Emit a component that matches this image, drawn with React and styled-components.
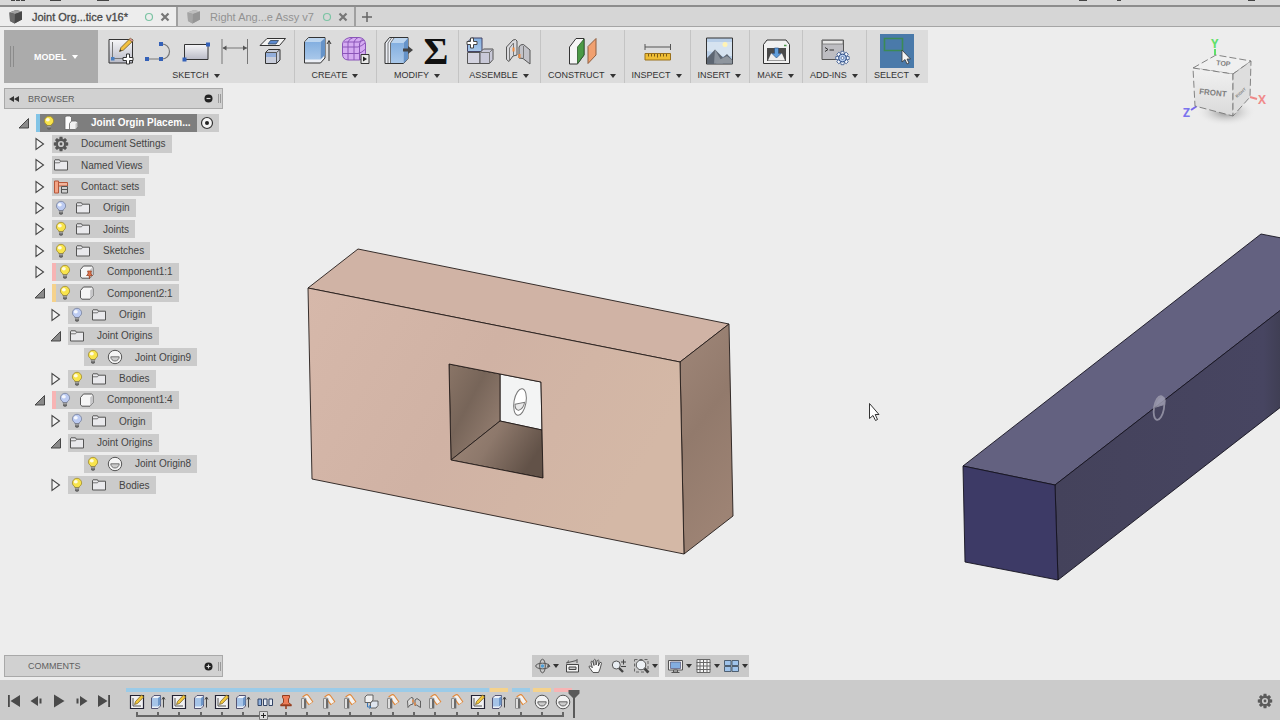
import { useState } from 'react'
import styled, { createGlobalStyle, css } from 'styled-components'

const GlobalStyle = createGlobalStyle`
  * {
    box-sizing: border-box;
  }

  body {
    margin: 0;
    background: #ededed;
    color: #444;
    font-family: 'Liberation Sans', Arial, sans-serif;
    font-size: 10px;
  }

  button {
    padding: 0;
    border: 0;
    background: none;
    color: inherit;
    font: inherit;
  }

  svg {
    display: block;
    flex: none;
  }
`

const Page = styled.div`
  display: flex;
  flex-direction: column;
  min-height: 100vh;
`

const QuickBar = styled.header`
  display: flex;
  justify-content: space-between;
  height: 7px;
  border-bottom: 2px solid #8d8d8d;
  background: #d8d8d8;
`

/* document tabs */

const TabBar = styled.nav`
  display: flex;
  height: 20px;
  border-bottom: 1px solid #a5a5a5;
  background: #d6d6d6;
`

const Tab = styled.div`
  display: flex;
  align-items: center;
  gap: 6px;
  width: 178px;
  padding: 0 6px 0 8px;
  border-right: 2px solid #a0a0a0;
  background: ${(p) => (p.$active ? '#ededed' : '#d6d6d6')};
  color: ${(p) => (p.$active ? '#484848' : '#929292')};
`

const TabName = styled.button`
  display: flex;
  flex: 1;
  align-items: center;
  gap: 8px;
  font-size: 11px;
  white-space: nowrap;
  -webkit-text-stroke: ${(p) => (p.$active ? '0.3px #484848' : '0')};
`

const NewTab = styled.button`
  width: 26px;
`

/* toolbar */

const Toolbar = styled.div`
  display: flex;
  align-self: flex-start;
  margin: 3px 0 0 4px;
  background: #dcdcdc;
`

const Workspace = styled.button`
  display: flex;
  align-items: center;
  gap: 20px;
  width: 94px;
  padding: 0 6px;
  background: #ababab;
  color: #fff;
  font-size: 9px;
  font-weight: bold;
`

const WorkspaceName = styled.span`
  display: flex;
  align-items: center;
  gap: 5px;
`

const Grip = styled.span`
  width: 4px;
  height: 21px;
  border: solid #8b8b8b;
  border-width: 0 1px;
`

const Group = styled.div`
  display: flex;
  flex-direction: column;
  align-items: center;
  gap: 2px;
  height: 53px;
  padding: 4px 5px 0;

  & + & {
    padding-left: 4px;
    border-left: 1px solid #c4c4c4;
  }
`

const Tools = styled.div`
  display: flex;
  gap: 4px;
`

const Tool = styled.button`
  background: ${(p) => (p.$selected ? '#4a7aaa' : 'none')};
`

const GroupMenu = styled.button`
  display: flex;
  align-items: center;
  gap: 5px;
  padding: 0 3px;
  color: #333;
  font-size: 9px;
  line-height: 11px;
`

const Arrow = styled.i`
  border: solid transparent;
  border-width: 4px 3px 0;
  border-top-color: ${(p) => p.$color || '#333'};
`

/* canvas and the panels over it */

const Stage = styled.main`
  position: relative;
  display: flex;
  flex: 1;
  flex-direction: column;
  justify-content: space-between;
  padding: 5px 4px 3px;
`

const Scene = styled.svg`
  position: absolute;
  inset: 0;
  width: 100%;
  height: 100%;
`

const CubeHolder = styled.div`
  position: absolute;
  top: 0;
  right: 0;
`

const Panel = styled.section`
  position: relative;
  width: 219px;
`

const PanelHead = styled.div`
  display: flex;
  align-items: center;
  gap: 9px;
  height: ${(p) => (p.$tall ? '22px' : '21px')};
  padding: 0 1px 0 4px;
  border: 1px solid #a9a9a9;
  background: #d1d1d1;
  color: #5f5f5f;
`

const PanelTitle = styled.h2`
  flex: 1;
  margin: 0;
  padding-left: ${(p) => (p.$inset ? '19px' : '0')};
  font-size: 9px;
  font-weight: normal;
`

const PanelGrip = styled.i`
  width: 3px;
  height: 9px;
  margin-left: -4px;
  border: solid #999;
  border-width: 0 1px;
`

const Tree = styled.ul`
  display: grid;
  grid-auto-rows: 1fr;
  min-height: 384px;
  margin: 3px 0 0;
  padding: 0;
  list-style: none;
`

const Row = styled.li`
  display: flex;
  align-items: center;
  gap: 4px;
  padding-left: ${(p) => p.$level * 16 + 12}px;
`

const Toggle = styled.button`
  display: flex;
  justify-content: center;
  width: 16px;
`

const Chip = styled.div`
  display: flex;
  align-items: center;
  height: 18px;
  padding-right: ${(p) => (p.$root ? '4px' : '6px')};
  background: #cbcbcb;
  white-space: nowrap;
`

const Strip = styled.i`
  align-self: stretch;
  width: 4px;
  background: ${(p) => p.$color};
`

const ChipBody = styled.div`
  display: flex;
  align-items: center;
  gap: 4px;
  height: 18px;

  ${(p) =>
    p.$root &&
    css`
      margin-right: 2px;
      padding-right: 7px;
      background: #7e7e7e;
      color: #fff;
      font-weight: bold;
    `}
`

const ChipText = styled.span`
  padding-left: 7px;
`

const BottomRow = styled.div`
  position: relative;
  display: grid;
  grid-template-columns: 1fr auto 1fr;
`

const NavBars = styled.div`
  display: flex;
  gap: 6px;
`

const NavBar = styled.div`
  display: flex;
  align-items: center;
  gap: ${(p) => p.$gap}px;
  height: 22px;
  padding: 0 1px;
  background: #c9c9c9;
`

const NavButton = styled.button`
  display: flex;
  align-items: center;
  gap: 1px;
`

/* timeline */

const Timeline = styled.footer`
  display: flex;
  height: 40px;
  padding: 0 6px 0 4px;
  background: #cbcbcb;
`

const Playback = styled.div`
  display: flex;
  align-items: center;
  margin-right: 12px;
  padding-top: 2px;
`

const PlayButton = styled.button`
  display: flex;
  justify-content: center;
  width: 22px;
`

const Track = styled.div`
  position: relative;
  padding-top: 8px;
`

const Features = styled.ol`
  display: grid;
  grid-template-columns: repeat(21, 1fr);
  width: 448px;
  margin: 0;
  padding: 0;
  list-style: none;
`

const Feature = styled.li`
  display: flex;
  flex-direction: column;
  align-items: center;
  gap: 2px;

  &::before {
    content: '';
    align-self: ${(p) => (p.$joined ? 'stretch' : 'center')};
    width: ${(p) => (p.$joined ? 'auto' : '18px')};
    height: 4px;
    background: ${(p) => p.$color};
  }

  &::after {
    content: '';
    width: 2px;
    height: 4px;
    background: #666;
  }
`

const Rail = styled.div`
  height: 2px;
  margin: -1px 10px 0;
  background: #666;
`

const Expand = styled.button`
  position: absolute;
  left: 133px;
  bottom: 0;
`

const Playhead = styled.button`
  position: absolute;
  top: 9px;
  right: -6px;
`

const Settings = styled.button`
  margin: 2px 0 0 auto;
`

/* icons */

const gearTeeth = [0, 45, 90, 135, 180, 225, 270, 315]

const Gear = ({ size = 18, color = '#555', hub = '#cbcbcb' }) => (
  <svg width={size} height={size} viewBox='0 0 18 18'>
    {gearTeeth.map((a) => (
      <path key={a} d='M7.6 1.8h2.8l.5 3H7.1z' fill={color} transform={`rotate(${a} 9 9)`} />
    ))}
    <circle cx='9' cy='9' r='4' fill={hub} stroke={color} strokeWidth='1.800' />
    <circle cx='9' cy='9' r='1.400' fill={color} />
  </svg>
)

const Bulb = ({ on }) => (
  <svg width='18' height='18' viewBox='0 0 18 18'>
    <path
      d='M6.9 10.800C5.100 9.600 4.400 8.300 4.400 6.900a4.600 4.600 0 0 1 9.200 0c0 1.400-.7 2.700-2.500 3.900v1H6.900z'
      fill={on ? '#f8e44c' : '#bccbf2'}
      stroke={on ? '#a08a2c' : '#76809c'}
      strokeWidth='.8'
    />
    <ellipse cx='7.800' cy='5.800' rx='2' ry='1.800' fill='#fff' opacity='.85' />
    <path d='M7 11.500h4v2.700l-1 1.500H8l-1-1.500z' fill='#666' />
    <path d='M7.200 12.800h3.600' stroke='#ddd' strokeWidth='.7' />
  </svg>
)

const Folder = () => (
  <svg width='18' height='18' viewBox='0 0 18 18'>
    <path d='M2.500 14V4.500l.5-.7h4.500l.8 1.400h7.200V14z' fill='#e9e9ec' stroke='#555' />
    <path d='M3 6.800h4.500l1-1.500' fill='none' stroke='#666' strokeWidth='.9' />
  </svg>
)

const ContactSets = () => (
  <svg width='18' height='18' viewBox='0 0 18 18'>
    <path d='M2.500 3h4v12h-4z' fill='#f3a486' stroke='#b5573a' />
    <path d='M6.500 4.500h9v3.500h-9z' fill='#f1b49c' stroke='#b5573a' />
    <path d='M9.500 8.500h6v6.500h-6zM9.500 11.500h6' fill='#cfcfcf' stroke='#555' />
  </svg>
)

const Component = ({ pinned }) => (
  <svg width='18' height='18' viewBox='0 0 18 18'>
    <path d='M2.500 6.500 5.500 3h8l1.500 1.300v7.500L12 15.200H4l-1.500-1.300z' fill='#f5f5f5' stroke='#555' />
    <path d='M12.200 15V6.200L15 4.300v7.500z' fill='#c6c6c8' />
    {pinned && (
      <path
        d='M9.500 8h4l-.5 1v2l1.500 1.500h-2.300L11.500 15.500 11 12.500H8.500L10 11V9z'
        fill='#e0744c'
        stroke='#8f3a1b'
        strokeWidth='.7'
      />
    )}
  </svg>
)

const Assembly = () => (
  <svg width='18' height='18' viewBox='0 0 18 18'>
    <path d='M3 3.500 4.500 2H8l1.500 1.500V8l-1 1v6.500H3z' fill='#fff' stroke='#666' strokeWidth='.8' />
    <path d='M7.500 9.500 9.500 7H14l1.500 1v4.500L13.500 15.500h-6z' fill='#f1f1f1' stroke='#666' strokeWidth='.8' />
    <path d='M13.500 15.500V9.700l2-1.700v4.500z' fill='#c4c4c4' />
  </svg>
)

const JointOrigin = ({ size = 18 }) => (
  <svg width={size} height={size} viewBox='0 0 18 18'>
    <circle cx='9' cy='9' r='6.700' fill='#f4f4f4' stroke='#555' />
    <path d='M4.800 8.800h8.400a4.200 4.200 0 0 1-8.400 0z' fill='#ccc' stroke='#666' strokeWidth='.9' />
  </svg>
)

const Opened = () => (
  <svg width='12' height='12' viewBox='0 0 12 12'>
    <path d='M10.500 1.500v9.500H1z' fill='#8a8a8a' stroke='#3a3a3a' strokeWidth='.9' />
  </svg>
)

const Closed = () => (
  <svg width='12' height='14' viewBox='0 0 12 14'>
    <path d='M2 1.500V12.500L9.500 7z' fill='#f4f4f4' stroke='#444' strokeWidth='1.100' />
  </svg>
)

const DocCube = ({ dim }) => (
  <svg width='16' height='16' viewBox='0 0 16 16' opacity={dim ? 0.45 : 1}>
    <path d='M1.500 3.500 8 1l6 1.500v8L6.500 14.500 2 12z' fill='#555' />
    <path d='M1.500 3.500 8 1l6 1.500L7 5z' fill='#a2a2a2' />
    <path d='M7 5l7-2.500v8l-7.500 4z' fill='#484848' />
    <path d='M1.500 3.500 7 5l-.5 9.500L2 12z' fill='#6b6b6b' />
  </svg>
)

const SyncDot = () => (
  <svg width='10' height='10' viewBox='0 0 10 10'>
    <circle cx='5' cy='5' r='3.500' fill='none' stroke='#7cc4a4' strokeWidth='1.200' />
  </svg>
)

const Cross = () => (
  <svg width='10' height='10' viewBox='0 0 10 10'>
    <path d='M1.500 1.500l7 7M8.500 1.500l-7 7' stroke='#777' strokeWidth='2.200' />
  </svg>
)

const Pencil = () => (
  <>
    <path d='M16.500 17.500 18 13.500 26.500 5l2.800 2.600L20.500 16z' fill='#f3c13f' stroke='#6b5724' strokeWidth='.8' />
    <path d='M26 5.500 27.500 4l2.800 2.600L29 8z' fill='#d99' stroke='#6b5724' strokeWidth='.6' />
    <path d='M16.500 17.500l.8-2.300 1.500 1.500z' fill='#333' />
  </>
)

// drawings of the toolbar buttons, each on a 34px square
const toolArt = {
  sketch: (
    <>
      <path d='M6 5.500h23.500V29H6z' fill='url(#metal)' stroke='#333' />
      <path d='M9.500 8v16.500H24' fill='none' stroke='#777' />
      <path d='M8 23h3.500v3.500H8z' fill='#4b7fc0' />
      <Pencil />
      <path
        d='M23.500 20h3v3.500H30v3h-3.500V30h-3v-3.500H20v-3h3.500z'
        fill='#fff'
        stroke='#333'
      />
    </>
  ),
  line: (
    <>
      <path d='M6 25h15a7.500 7.500 0 0 0 0-15h-1' fill='none' stroke='#777' strokeWidth='1.200' />
      <path d='M4 23h4v4H4zM18 23h4v4h-4zM18 8h4v4h-4z' fill='#3461b8' />
    </>
  ),
  rectangle: (
    <>
      <path d='M5.500 10.500H29V25.500H5.500z' fill='url(#metal)' stroke='#333' />
      <path d='M3.500 23.500h4v4h-4zM27 8.500h4v4h-4z' fill='#3461b8' />
    </>
  ),
  dimension: (
    <>
      <path d='M5 5v25M30.500 5v25M6 14h24' stroke='#777' fill='none' />
      <path d='M5.500 14l4-2.500v5zM30 14l-4-2.500v5z' fill='#555' />
    </>
  ),
  project: (
    <>
      <path d='M12 4.500h18.500L24.500 11.500H5z' fill='#f4f4f4' stroke='#333' />
      <path d='M15.500 6.500h8l-2.500 3.500h-8z' fill='#5c8ad0' stroke='#345' strokeWidth='.8' />
      <path d='M10.500 18.500 13.500 15.500H25V26l-3.500 3.500h-11z' fill='#c8cddb' stroke='#333' />
      <path d='M11 19h10v4H11z' fill='#93aedb' />
      <path d='M10.500 18.500h11V29.500M21.500 18.500 25 15.500' fill='none' stroke='#555' />
    </>
  ),
  extrude: (
    <>
      <path d='M5.500 8 9.500 3.500H26V24l-4.500 5h-16z' fill='#eceff5' stroke='#333' />
      <path d='M6 8h15.500v17.500H6z' fill='url(#blue)' />
      <path d='M6 8l3.700-4H26l-4.500 4z' fill='#bcd5ef' />
      <path d='M21.500 8 26 4v17l-4.500 4.500z' fill='#6593c9' />
      <path d='M30 27V7M28 10l2-3.500 2 3.500' fill='none' stroke='#333' />
    </>
  ),
  form: (
    <>
      <path d='M5.500 10Q6 5 13 3.500h9Q28 4 28.500 10v9q-.5 6-6 7H11q-5.500-.5-5.500-6z' fill='#d5abf2' stroke='#8a55b8' />
      <path d='M5.500 13H21q4-1 7-4M5.500 19.500H21q4-1 7-4M11 26V8q1-3 5-4.500M17 26V8q1-3 4-4.500M22.500 26V10q1-4 3-5M7 8h15l5-2' fill='none' stroke='#8a55b8' />
      <path d='M24 20.500h8v9h-8z' fill='#e9e9e9' stroke='#333' />
      <path d='M26 22.500l4 2.500-4 2.500z' fill='#222' />
    </>
  ),
  pressPull: (
    <>
      <path d='M4 9 8.500 3.500H27V24.500L22.500 29.500H4z' fill='#eceff5' stroke='#333' />
      <path d='M9.500 9 13 4h14l-4.500 5z' fill='#bcd5ef' />
      <path d='M9.500 9h13v20h-13z' fill='url(#blue)' />
      <path d='M22.500 9 27 4v20.500l-4.500 5z' fill='#6593c9' />
      <path d='M9.500 29V9l3.500-5M7 29V9l3.500-5' fill='none' stroke='#555' strokeWidth='.8' />
      <path d='M22 14.500h5V12l5 4-5 4v-2.500h-5z' fill='#444' />
    </>
  ),
  parameters: (
    <text x='17' y='30' fontFamily='Liberation Serif, serif' fontSize='38' fontWeight='bold' textAnchor='middle' fill='#111'>
      Σ
    </text>
  ),
  newComponent: (
    <>
      <path d='M4.500 17.500V8l4-4H19v13.500z' fill='url(#blue)' stroke='#446' />
      <path d='M4.500 18.500H17V29.500H4.500z' fill='#d4d4e0' stroke='#555' />
      <path d='M17 18.500 20.500 15H30v10.500L26.500 29.500H17z' fill='#c9c9d8' stroke='#555' />
      <path d='M17.500 18.500h9V29.500M26.500 18.500 30 15' fill='none' stroke='#777' />
      <path d='M7.500 4h3v3.500H14v3h-3.500V14h-3v-3.500H4v-3h3.500z' fill='#fff' stroke='#444' />
    </>
  ),
  joint: (
    <>
      <path d='M5.500 13 12 6q3-1.500 4 1v14l-4 1-4 5.500-2.500-2z' fill='#dadadd' stroke='#555' />
      <path d='M8.500 26V14l4-5v13' fill='none' stroke='#777' />
      <path d='M18 13q1-3 4.500-2.500L29 16v14l-7-5.500-4-.5z' fill='#c2c2c8' stroke='#555' />
      <path d='M22.500 24V12' stroke='#777' />
      <path d='M12.500 13.500v4M18.500 20v4' stroke='#f08a3e' strokeWidth='2' />
    </>
  ),
  construct: (
    <>
      <path d='M4.500 13 11 4.500H19V21l-6.500 9h-8z' fill='#f6f6f6' stroke='#333' />
      <path d='M12.500 13 19 5v16l-6.500 8.500z' fill='#4b9a45' stroke='#2a5a28' strokeWidth='.8' />
      <path d='M23 12.500 31 4.500V21l-8 8.500z' fill='#f1a06f' stroke='#8f5f40' />
    </>
  ),
  inspect: (
    <>
      <path d='M5 10v6M30.500 10v6M5 13h25' stroke='#555' fill='none' />
      <path d='M5 19.500h25.500V26H5z' fill='#eebd35' stroke='#9a701b' />
      <path d='M8.500 20v2.500M11.500 20v2.500M14.500 20v2.500M17.500 20v3.500M20.500 20v2.500M23.500 20v2.500M26.500 20v2.500' stroke='#7c5a17' />
    </>
  ),
  insert: (
    <>
      <path d='M4.500 4h26v26h-26z' fill='#b9cfe8' stroke='#333' />
      <path d='M5 17l6 1 6 4h13V8H5z' fill='#d6e3f0' />
      <circle cx='23' cy='10.500' r='2.500' fill='#fff3b5' />
      <path d='M5 24l8-8.500 8 8 4-3.500 5.500 6v4H5z' fill='#5d6672' />
      <path d='M13 15.500 21 29.500H12z' fill='#8b939d' />
      <path d='M17 26l8-4 5 4v3.500H14z' fill='#8f969e' />
    </>
  ),
  make: (
    <>
      <path d='M4.500 10.500 8 6h19l3.500 4.500V29.500h-26z' fill='#f1f1f1' stroke='#333' />
      <path d='M8 14h19v13H8z' fill='#4a4a4a' />
      <path d='M9 26.500l3-7h11l3 7z' fill='#eee' />
      <path d='M15.500 14h4v5.500H22L17.500 24 13 19.500h2.500z' fill='#5f9edc' stroke='#247' strokeWidth='.6' />
      <path d='M25 11.500h2.500' stroke='#4a9a4a' strokeWidth='1.500' />
    </>
  ),
  addIns: (
    <>
      <path d='M5 6h21.500v19.500H5z' fill='#bdbdc2' stroke='#555' />
      <path d='M5.500 6.500h20.500v3.500H5.500z' fill='#e6e6e6' stroke='#666' strokeWidth='.7' />
      <path d='M8 13.500l3 2-3 2M12.500 16h4.500' fill='none' stroke='#333' />
      <g transform='translate(16.500 15)'>
        {gearTeeth.map((a) => (
          <path
            key={a}
            d='M7.600 2.300h2.800l.5 3H7.100z'
            fill='#f3f7fd'
            stroke='#36558c'
            strokeWidth='.8'
            transform={`rotate(${a} 9 9)`}
          />
        ))}
        <circle cx='9' cy='9' r='3.800' fill='#b9d0f0' stroke='#36558c' />
        <circle cx='9' cy='9' r='1.500' fill='#f3f7fd' stroke='#36558c' strokeWidth='.7' />
      </g>
    </>
  ),
  select: (
    <>
      <path d='M4.500 4.500h18v12h-18z' fill='none' stroke='#3b8a55' strokeWidth='1.600' />
      <path d='M22 16v12l3-2.500 2 4.500 2-1-2-4h3.500z' fill='#f4f4f4' stroke='#333' strokeWidth='.8' />
    </>
  ),
}

const ToolIcon = ({ name }) => (
  <svg width='34' height='34' viewBox='0 0 34 34' overflow='visible'>
    {toolArt[name]}
  </svg>
)

const navArt = {
  orbit: (
    <>
      <ellipse cx='9' cy='9' rx='6.800' ry='2.800' fill='none' stroke='#555' />
      <ellipse cx='9' cy='9' rx='2.800' ry='6.800' fill='none' stroke='#555' />
      <path d='M14.500 6.500l2.500 3-3.500.8z' fill='#555' />
      <circle cx='9' cy='9' r='1.700' fill='#4d9fd8' />
    </>
  ),
  lookAt: (
    <>
      <path d='M3 7.500h12V15H3z' fill='#f1f1f1' stroke='#444' />
      <path d='M5.500 10h7v2.500h-7z' fill='#c9c9c9' stroke='#444' />
      <path d='M2.500 6 13 3.500M13.500 2v4M4 6l1-2.500' stroke='#555' fill='none' />
    </>
  ),
  pan: (
    <path
      d='M6.500 15.500 2.500 10q0-1.500 1.500-1l1.800 1.800L4.500 5q.3-1.500 1.700-.5L7.500 8.500 7.300 3q.9-1.500 1.900 0l.3 5L10.800 3.500q1.200-1 1.700.2L11.800 9l1.700-3.500q1.500-.6 1.500.8L13.500 12l-1.500 3.500z'
      fill='#fafafa'
      stroke='#444'
      strokeWidth='.9'
    />
  ),
  zoom: (
    <>
      <path d='M9 10.500 13.500 15' stroke='#444' strokeWidth='2.400' />
      <circle cx='6.800' cy='8' r='4' fill='#e8edf2' stroke='#555' />
      <path d='M11.500 5h5M14 2.500v5M11.500 9.500h5' stroke='#444' fill='none' />
    </>
  ),
  fit: (
    <>
      <path d='M2 2.500h13.500v12.500H2z' fill='none' stroke='#666' strokeDasharray='3 2' />
      <path d='M11.500 11 16 15.500' stroke='#444' strokeWidth='2.600' />
      <circle cx='8.500' cy='8' r='4.800' fill='#edf1f5' stroke='#555' />
    </>
  ),
  display: (
    <>
      <path d='M2 3.500h14v9.500H2z' fill='#eee' stroke='#555' />
      <path d='M4 5h10v6.500H4z' fill='#83aee0' stroke='#557' strokeWidth='.7' />
      <path d='M7 13h4v2H7zM5 15.500h8' fill='#ddd' stroke='#555' />
    </>
  ),
  grid: (
    <path
      d='M2.500 2.500h13v13h-13zM5.500 2v14M9 2v14M12.500 2v14M2 5.500h14M2 9h14M2 12.500h14'
      fill='#f4f4f4'
      stroke='#666'
    />
  ),
  viewports: (
    <path
      d='M2 3.500h6.500v5H2zM9.500 3.500H16v5H9.500zM2 9.500h6.500v5H2zM9.500 9.500H16v5H9.500z'
      fill='#9fc3ea'
      stroke='#456'
      strokeWidth='.9'
    />
  ),
}

const NavIcon = ({ name }) => (
  <svg width='19' height='18' viewBox='0 0 18 18'>
    {navArt[name]}
  </svg>
)

const featureArt = {
  sketch: (
    <>
      <path d='M1.500 1.500h13v13h-13z' fill='#f0f0f2' stroke='#223' strokeWidth='1.200' />
      <path d='M4 4v8h8' fill='none' stroke='#555' />
      <path d='M5.500 10.500l1-3L12.500 1l2.200 2-6.200 6.500z' fill='#f0c53a' stroke='#6b5724' strokeWidth='.7' />
    </>
  ),
  extrude: (
    <>
      <path d='M1.500 4 4 1.500h6.500V12L8 14.500H1.500z' fill='#eef2f8' stroke='#446' strokeWidth='.9' />
      <path d='M2 4h6v8.500H2z' fill='#a6c4e8' />
      <path d='M8 4l2.500-2v8.500L8 12.500z' fill='#6d96c8' />
      <path d='M13.500 13.500V3.500M12 5.500 13.500 3 15 5.500' fill='none' stroke='#444' />
    </>
  ),
  pattern: (
    <>
      <path d='M1 5h3.500v6.500H1z' fill='#8eb0de' stroke='#346' />
      <path d='M6.500 5H10v6.500H6.500zM12 5h3.500v6.500H12z' fill='#e4eaf3' stroke='#346' />
    </>
  ),
  pin: (
    <>
      <path d='M4.500 1.500h7v2L10.500 5v3.500L13.500 11H2.500l3-2.500V5l-1-1.500z' fill='#ee7d58' stroke='#943d1f' />
      <path d='M2.500 11.500h11M8 11.500V15' stroke='#943d1f' strokeWidth='1.500' />
    </>
  ),
  joint: (
    <g fill='none' strokeLinejoin='round'>
      <path d='M5 5 7.500 3.200 12 9.500' stroke='#e2893a' strokeWidth='6' />
      <path d='M5 5 7.500 3.200 11.700 9' stroke='#f2f2f2' strokeWidth='3.800' />
      <path d='M4.800 4.500v10' stroke='#6b6b6b' strokeWidth='5' />
      <path d='M4 5v9' stroke='#ededed' strokeWidth='1.800' />
      <path d='M2.500 4.800q2-2 4.600-.3' stroke='#888' strokeWidth='.8' />
    </g>
  ),
  copy: (
    <>
      <path d='M2 3 4 1h6v5L8 8.500H2z' fill='#f1f1f1' stroke='#555' strokeWidth='.9' />
      <path d='M7.500 9 9.500 7H15v4.500l-2 2.500H7.500z' fill='#dfe5ee' stroke='#555' strokeWidth='.9' />
      <path d='M4.500 9v4h3M6 11.500 7.800 13 6 14.500' fill='none' stroke='#3777b8' />
    </>
  ),
  asBuilt: (
    <>
      <path d='M1.500 7 5 3.500l2 .5v6l-3 1L2 13.500z' fill='#ddd' stroke='#555' strokeWidth='.9' />
      <path d='M9 6l2-1.500L14.500 7v6.500l-4-2.500-1.500.5z' fill='#ccc' stroke='#555' strokeWidth='.9' />
      <path d='M7 5.500v3M9 8.500v3' stroke='#f08a3e' strokeWidth='1.400' />
    </>
  ),
  origin: (
    <>
      <circle cx='8' cy='8' r='6.800' fill='#f2f2f2' stroke='#555' />
      <path d='M3.800 7.800h8.400a4.200 4.200 0 0 1-8.400 0z' fill='#ccc' stroke='#555' strokeWidth='.9' />
    </>
  ),
}

const playArt = {
  'Go to start': 'M1 2h1.800v12H1zM13 2v12L3.500 8z',
  'Step back': 'M9 3v10L1.500 8zM10.500 5.500h2v5h-2z',
  Play: 'M3 1.500v13L13.500 8z',
  'Step forward': 'M7 3v10l7.500-5zM3.500 5.500h2v5h-2z',
  'Go to end': 'M13.200 2H15v12h-1.800zM3 2v12l9.500-6z',
}

/* data */

const toolGroups = [
  { label: 'SKETCH', tools: ['sketch', 'line', 'rectangle', 'dimension', 'project'] },
  { label: 'CREATE', tools: ['extrude', 'form'] },
  { label: 'MODIFY', tools: ['pressPull', 'parameters'] },
  { label: 'ASSEMBLE', tools: ['newComponent', 'joint'] },
  { label: 'CONSTRUCT', tools: ['construct'] },
  { label: 'INSPECT', tools: ['inspect'] },
  { label: 'INSERT', tools: ['insert'] },
  { label: 'MAKE', tools: ['make'] },
  { label: 'ADD-INS', tools: ['addIns'] },
  { label: 'SELECT', tools: ['select'] },
]

const PINK = '#f7b4b4'
const YELLOW = '#f5d28c'
const BLUE = '#9bcbe8'

const treeRows = [
  { text: 'Document Settings', level: 1, icon: <Gear /> },
  { text: 'Named Views', level: 1, icon: <Folder /> },
  { text: 'Contact: sets', level: 1, icon: <ContactSets /> },
  { text: 'Origin', level: 1, bulb: 'off', icon: <Folder /> },
  { text: 'Joints', level: 1, bulb: 'on', icon: <Folder /> },
  { text: 'Sketches', level: 1, bulb: 'on', icon: <Folder /> },
  { text: 'Component1:1', level: 1, bulb: 'on', strip: PINK, icon: <Component pinned /> },
  { text: 'Component2:1', level: 1, bulb: 'on', strip: YELLOW, open: true, icon: <Component /> },
  { text: 'Origin', level: 2, bulb: 'off', icon: <Folder /> },
  { text: 'Joint Origins', level: 2, open: true, icon: <Folder /> },
  { text: 'Joint Origin9', level: 3, bulb: 'on', leaf: true, icon: <JointOrigin /> },
  { text: 'Bodies', level: 2, bulb: 'on', icon: <Folder /> },
  { text: 'Component1:4', level: 1, bulb: 'off', strip: PINK, open: true, icon: <Component /> },
  { text: 'Origin', level: 2, bulb: 'off', icon: <Folder /> },
  { text: 'Joint Origins', level: 2, open: true, icon: <Folder /> },
  { text: 'Joint Origin8', level: 3, bulb: 'on', leaf: true, icon: <JointOrigin /> },
  { text: 'Bodies', level: 2, bulb: 'on', icon: <Folder /> },
]

const navGroups = [
  {
    gap: 4,
    items: [
      { name: 'orbit', menu: true },
      { name: 'lookAt' },
      { name: 'pan' },
      { name: 'zoom' },
      { name: 'fit', menu: true },
    ],
  },
  {
    gap: 2,
    items: [
      { name: 'display', menu: true },
      { name: 'grid', menu: true },
      { name: 'viewports', menu: true },
    ],
  },
]

const features = [
  'sketch', 'extrude', 'sketch', 'extrude', 'sketch', 'extrude', 'pattern',
  'pin', 'joint', 'joint', 'joint', 'copy', 'joint', 'asBuilt', 'joint',
  'joint', 'sketch', 'extrude', 'joint', 'origin', 'origin',
]

const featureColor = (i) => ({ 17: YELLOW, 19: YELLOW, 20: PINK })[i] || BLUE

/* parts */

const Defs = styled(({ className }) => (
  <svg className={className} width='0' height='0'>
    <defs>
      <linearGradient id='metal' x1='0' y1='0' x2='0' y2='1'>
        <stop offset='0' stopColor='#f6f6f8' />
        <stop offset='1' stopColor='#b9bac6' />
      </linearGradient>
      <linearGradient id='blue' x1='0' y1='0' x2='0' y2='1'>
        <stop offset='0' stopColor='#83afe0' />
        <stop offset='1' stopColor='#a9c8ea' />
      </linearGradient>
    </defs>
  </svg>
))`
  position: absolute;
`

const Model = () => (
  <Scene viewBox='0 83 1280 597' preserveAspectRatio='xMinYMin slice'>
    <defs>
      <linearGradient id='tan' x1='0' y1='0' x2='1' y2='.4'>
        <stop offset='0' stopColor='#d6b8aa' />
        <stop offset='.5' stopColor='#d0b2a4' />
        <stop offset='1' stopColor='#d4b8a6' />
      </linearGradient>
      <linearGradient id='tanSide' x1='0' y1='0' x2='.3' y2='1'>
        <stop offset='0' stopColor='#a08779' />
        <stop offset='.5' stopColor='#927a6c' />
        <stop offset='1' stopColor='#9d8374' />
      </linearGradient>
      <linearGradient id='wall' x1='0' y1='0' x2='1' y2='1'>
        <stop offset='0' stopColor='#8a7567' />
        <stop offset='.4' stopColor='#776559' />
        <stop offset='1' stopColor='#9d8678' />
      </linearGradient>
      <linearGradient id='floor' x1='0' y1='0' x2='1' y2='.4'>
        <stop offset='0' stopColor='#9f8879' />
        <stop offset='.5' stopColor='#8d786b' />
        <stop offset='1' stopColor='#625248' />
      </linearGradient>
      <linearGradient id='navySide' x1='0' y1='0' x2='1' y2='0'>
        <stop offset='0' stopColor='#44425b' />
        <stop offset='.7' stopColor='#474561' />
        <stop offset='.8' stopColor='#3a3a4a' />
      </linearGradient>
    </defs>
    <g stroke='#241c1a' strokeWidth='.9' strokeLinejoin='round'>
      <path d='M308 288 358 249 729 324 680 362z' fill='#d0b3a5' />
      <path d='M680 362 729 324 733 516 684 554z' fill='url(#tanSide)' />
      <path d='M500 374 541 382 542 430 500 421z' fill='#f3f4f4' />
      <path d='M449 364 500 374V421L451 460z' fill='url(#wall)' />
      <path d='M451 460 500 421 542 430 543 478z' fill='url(#floor)' />
      <path
        d='M308 288 680 362 684 554 312 479zM449 364 451 460 543 478 541 382z'
        fill='url(#tan)'
        fillRule='evenodd'
      />
    </g>
    <g transform='rotate(10 520 402)' fill='#fff' stroke='#777'>
      <ellipse cx='520' cy='402' rx='6' ry='13.500' />
      <path d='M515.500 405 524.500 401.500q.5 6-4.500 9-4-.5-4.500-5.500z' fill='#e9e9e9' />
    </g>
    <g stroke='#15131f' strokeWidth='.9' strokeLinejoin='round'>
      <path d='M963 466 1261 234 1353 252V254L1055 485z' fill='#636180' />
      <path d='M1055 485 1353 254V351L1058 580z' fill='url(#navySide)' />
      <path d='M963 466 1055 485 1058 580 965 562z' fill='#3d3a66' />
    </g>
    <g transform='rotate(10 1159 408)' fill='none' stroke='#a09fb0' opacity='.8'>
      <ellipse cx='1159' cy='408' rx='5' ry='12' strokeWidth='1.800' />
      <path d='M1155 408 1164 403.500Q1164.500 396 1160 396.500 1155.500 397 1155 408z' fill='#a5a4b8' />
    </g>
    <path
      d='M869.500 403.500V418.500L873 415.500 875.500 420.500 877.500 419.500 875.200 414.500H879z'
      fill='#fff'
      stroke='#333'
    />
  </Scene>
)

const ViewCube = () => (
  <CubeHolder>
    <svg width='110' height='57' viewBox='1170 83 110 57' overflow='visible' fontWeight='bold'>
      <defs>
        <radialGradient id='shade'>
          <stop offset='0' stopColor='#8a8a8a' />
          <stop offset='1' stopColor='#ededed' stopOpacity='0' />
        </radialGradient>
        <linearGradient id='cubeFront' x1='0' y1='0' x2='0' y2='1'>
          <stop offset='0' stopColor='#f1f1f1' />
          <stop offset='1' stopColor='#dadada' />
        </linearGradient>
      </defs>
      <ellipse cx='1226' cy='112' rx='30' ry='14' fill='url(#shade)' />
      <path d='M1215 55V49' stroke='#5fe06a' strokeWidth='2' />
      <path d='M1250 97 1257 99' stroke='#e88' strokeWidth='2' />
      <path d='M1197 106 1191 110' stroke='#76e' strokeWidth='2' />
      <g stroke='#777' strokeDasharray='7 3' strokeWidth='.9'>
        <path d='M1193 68 1216 55 1251 61 1233 74z' fill='#f0f0f0' />
        <path d='M1193 68 1233 74V116L1195 106z' fill='url(#cubeFront)' />
        <path d='M1233 74 1251 61 1250 97 1233 116z' fill='#dedede' />
      </g>
      <g fill='#808080' fontFamily='Liberation Sans, sans-serif'>
        <text x='1199' y='94' fontSize='8' transform='rotate(6 1199 94)'>FRONT</text>
        <text x='1216' y='65' fontSize='7' transform='rotate(6 1216 65)'>TOP</text>
        <text x='1237' y='98' fontSize='4' transform='rotate(-42 1237 98)'>RIGHT</text>
      </g>
      <g fontFamily='Open Sans, sans-serif' fontSize='12'>
        <text x='1211' y='48' fill='#5fe06a'>Y</text>
        <text x='1258' y='104' fill='#f08a8a'>X</text>
        <text x='1183' y='117' fill='#7b74ee'>Z</text>
      </g>
    </svg>
  </CubeHolder>
)

const TreeRow = ({ row }) => (
  <Row $level={row.level}>
    {row.leaf ? (
      <Toggle as='span' />
    ) : (
      <Toggle aria-label={`Toggle ${row.text}`}>{row.open ? <Opened /> : <Closed />}</Toggle>
    )}
    <Chip>
      {row.strip && <Strip $color={row.strip} />}
      <ChipBody>
        {row.bulb && <Bulb on={row.bulb === 'on'} />}
        {row.icon}
        <ChipText>{row.text}</ChipText>
      </ChipBody>
    </Chip>
  </Row>
)

const BrowserPanel = () => (
  <Panel>
    <PanelHead>
      <svg width='10' height='8' viewBox='0 0 10 8'>
        <path d='M5 1v6L0 4zM10 1v6L5 4z' fill='#333' />
      </svg>
      <PanelTitle>BROWSER</PanelTitle>
      <button aria-label='Collapse browser'>
        <svg width='9' height='9' viewBox='0 0 9 9'>
          <circle cx='4.500' cy='4.500' r='4' fill='#222' />
          <path d='M2.500 4.500h4' stroke='#ddd' strokeWidth='1.200' />
        </svg>
      </button>
      <PanelGrip />
    </PanelHead>
    <Tree>
      <Row $level={0}>
        <Toggle aria-label='Toggle root'>
          <Opened />
        </Toggle>
        <Chip $root>
          <Strip $color='#82c4e6' />
          <ChipBody $root>
            <Bulb on />
            <Assembly />
            <ChipText>Joint Orgin Placem...</ChipText>
          </ChipBody>
          <svg width='16' height='16' viewBox='0 0 16 16'>
            <circle cx='8' cy='8' r='5.500' fill='#f4f4f4' stroke='#333' strokeWidth='1.200' />
            <circle cx='8' cy='8' r='2' fill='#222' />
          </svg>
        </Chip>
      </Row>
      {treeRows.map((row, i) => (
        <TreeRow key={i} row={row} />
      ))}
    </Tree>
  </Panel>
)

const TimelineBar = () => (
  <Timeline>
    <Playback>
      {Object.entries(playArt).map(([name, d]) => (
        <PlayButton key={name} aria-label={name}>
          <svg width='16' height='16' viewBox='0 0 16 16'>
            <path d={d} fill='#4a4a4a' />
          </svg>
        </PlayButton>
      ))}
    </Playback>
    <Track>
      <Features>
        {features.map((name, i) => (
          <Feature key={i} $color={featureColor(i)} $joined={i < 17}>
            <svg width='16' height='16' viewBox='0 0 16 16'>
              {featureArt[name]}
            </svg>
          </Feature>
        ))}
      </Features>
      <Rail />
      <Expand aria-label='Expand group'>
        <svg width='9' height='9' viewBox='0 0 9 9'>
          <path d='M.5.5h8v8h-8z' fill='#ddd' stroke='#777' />
          <path d='M4.500 2v5M2 4.500h5' stroke='#222' />
        </svg>
      </Expand>
      <Playhead aria-label='History marker'>
        <svg width='12' height='29' viewBox='0 0 12 29'>
          <path d='M.5 1h11v3.500L7 9v20H5V9L.5 4.500z' fill='#5a5a5a' />
        </svg>
      </Playhead>
    </Track>
    <Settings aria-label='Timeline settings'>
      <Gear color='#5a5a5a' />
    </Settings>
  </Timeline>
)

const App = () => {
  const [active, setActive] = useState(0)
  const tabs = ['Joint Org...tice v16*', 'Right Ang...e Assy v7']

  return (
    <Page>
      <GlobalStyle />
      <Defs />
      <QuickBar>
        <svg width='120' height='5' viewBox='0 0 120 5'>
          <path d='M11 0h4v1h-4zM16 0h4v1h-4zM21 0h4v1h-4zM50 0h11v1H50zM97 0h12v1H97z' fill='#444' />
        </svg>
        <svg width='220' height='5' viewBox='1060 0 220 5'>
          <path d='M1079 0h8v1h-8zM1117 0h4v1h-4zM1248 0h7v1h-7z' fill='#444' />
        </svg>
      </QuickBar>
      <TabBar>
        {tabs.map((name, i) => (
          <Tab key={name} $active={i === active}>
            <TabName $active={i === active} onClick={() => setActive(i)}>
              <DocCube dim={i !== active} />
              {name}
            </TabName>
            <SyncDot />
            <button aria-label={`Close ${name}`}>
              <Cross />
            </button>
          </Tab>
        ))}
        <NewTab aria-label='New tab'>
          <svg width='22' height='12' viewBox='0 0 22 12'>
            <path d='M11 1v10M6 6h10' stroke='#666' strokeWidth='1.500' />
          </svg>
        </NewTab>
      </TabBar>
      <Toolbar>
        <Workspace>
          <Grip />
          <WorkspaceName>
            MODEL
            <Arrow $color='#fff' />
          </WorkspaceName>
        </Workspace>
        {toolGroups.map((group) => (
          <Group key={group.label}>
            <Tools>
              {group.tools.map((name) => (
                <Tool key={name} aria-label={name} $selected={name === 'select'}>
                  <ToolIcon name={name} />
                </Tool>
              ))}
            </Tools>
            <GroupMenu>
              {group.label}
              <Arrow />
            </GroupMenu>
          </Group>
        ))}
      </Toolbar>
      <Stage>
        <Model />
        <ViewCube />
        <BrowserPanel />
        <BottomRow>
          <Panel>
            <PanelHead $tall>
              <PanelTitle $inset>COMMENTS</PanelTitle>
              <button aria-label='Expand comments'>
                <svg width='9' height='9' viewBox='0 0 9 9'>
                  <circle cx='4.500' cy='4.500' r='4' fill='#222' />
                  <path d='M2.500 4.500h4M4.500 2.500v4' stroke='#ddd' strokeWidth='1.200' />
                </svg>
              </button>
              <PanelGrip />
            </PanelHead>
          </Panel>
          <NavBars>
            {navGroups.map((group, i) => (
              <NavBar key={i} $gap={group.gap}>
                {group.items.map((item) => (
                  <NavButton key={item.name} aria-label={item.name}>
                    <NavIcon name={item.name} />
                    {item.menu && <Arrow />}
                  </NavButton>
                ))}
              </NavBar>
            ))}
          </NavBars>
        </BottomRow>
      </Stage>
      <TimelineBar />
    </Page>
  )
}

export default App
